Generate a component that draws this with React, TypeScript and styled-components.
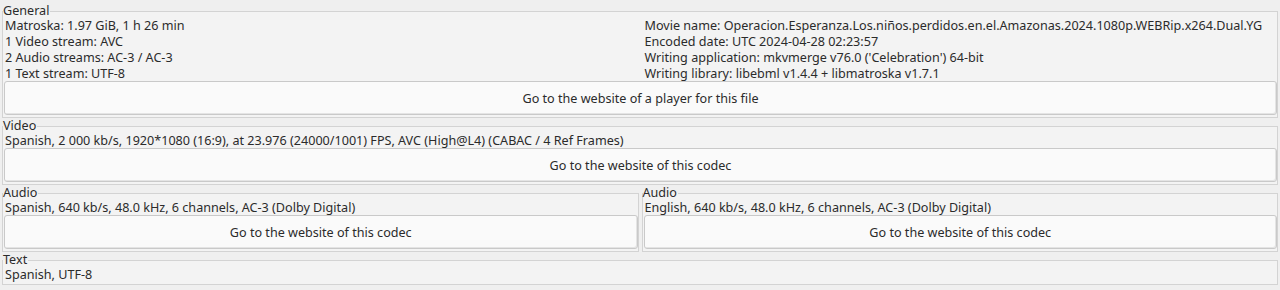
import styled, { createGlobalStyle } from 'styled-components'

const GlobalStyle = createGlobalStyle`
  html, body {
    margin: 0;
    background: #efefef;
    font-family: 'Noto Sans', 'DejaVu Sans', sans-serif;
    font-size: 12.6px;
    color: #2b2b2b;
  }
`

const Page = styled.div`
  display: flex;
  flex-direction: column;
  gap: 1px;
  padding: 4px 2px 0;
`

const Group = styled.fieldset`
  margin: 0;
  min-width: 0;
  padding: 0 0 2px 1px;
  border: 1px solid #d3d3d3;
  background: #f3f3f3;
  display: flex;
  flex-direction: column;
`

const Title = styled.legend`
  padding: 0 1px 0 0;
  margin-left: -1px;
  line-height: 14px;
`

const Row = styled.div`
  line-height: 15px;
  white-space: nowrap;
  padding-left: 1px;
`

const Columns = styled.div`
  display: grid;
  grid-template-columns: 1fr 1fr;
  column-gap: 6px;
`

const Lines = styled.div`
  display: flex;
  flex-direction: column;
  gap: 1px;
`

const Button = styled.button`
  height: 34px;
  margin: 0;
  border: 1px solid #c9c9c9;
  border-radius: 3px;
  background: #fafafa;
  font: inherit;
  color: inherit;
  text-align: center;
  box-shadow: inset -1px -1px 0 #e4e4e4;
`

const Pair = styled.div`
  display: grid;
  grid-template-columns: 1fr 1fr;
  gap: 3px;
`

const general = [
  'Matroska: 1.97 GiB, 1 h 26 min',
  '1 Video stream: AVC',
  '2 Audio streams: AC-3 / AC-3',
  '1 Text stream: UTF-8',
]

const tags = [
  'Movie name: Operacion.Esperanza.Los.niños.perdidos.en.el.Amazonas.2024.1080p.WEBRip.x264.Dual.YG',
  'Encoded date: UTC 2024-04-28 02:23:57',
  "Writing application: mkvmerge v76.0 ('Celebration') 64-bit",
  'Writing library: libebml v1.4.4 + libmatroska v1.7.1',
]

const audio = [
  'Spanish, 640 kb/s, 48.0 kHz, 6 channels, AC-3 (Dolby Digital)',
  'English, 640 kb/s, 48.0 kHz, 6 channels, AC-3 (Dolby Digital)',
]

export default function App() {
  return (
    <>
      <GlobalStyle />
      <Page>
        <Group>
          <Title>General</Title>
          <Columns>
            <Lines>
              {general.map((l) => (
                <Row key={l}>{l}</Row>
              ))}
            </Lines>
            <Lines>
              {tags.map((l) => (
                <Row key={l}>{l}</Row>
              ))}
            </Lines>
          </Columns>
          <Button>Go to the website of a player for this file</Button>
        </Group>

        <Group>
          <Title>Video</Title>
          <Row>
            Spanish, 2 000 kb/s, 1920*1080 (16:9), at 23.976 (24000/1001) FPS, AVC (High@L4) (CABAC / 4 Ref Frames)
          </Row>
          <Button>Go to the website of this codec</Button>
        </Group>

        <Pair>
          {audio.map((l) => (
            <Group key={l}>
              <Title>Audio</Title>
              <Row>{l}</Row>
              <Button>Go to the website of this codec</Button>
            </Group>
          ))}
        </Pair>

        <Group>
          <Title>Text</Title>
          <Row>Spanish, UTF-8</Row>
        </Group>
      </Page>
    </>
  )
}
